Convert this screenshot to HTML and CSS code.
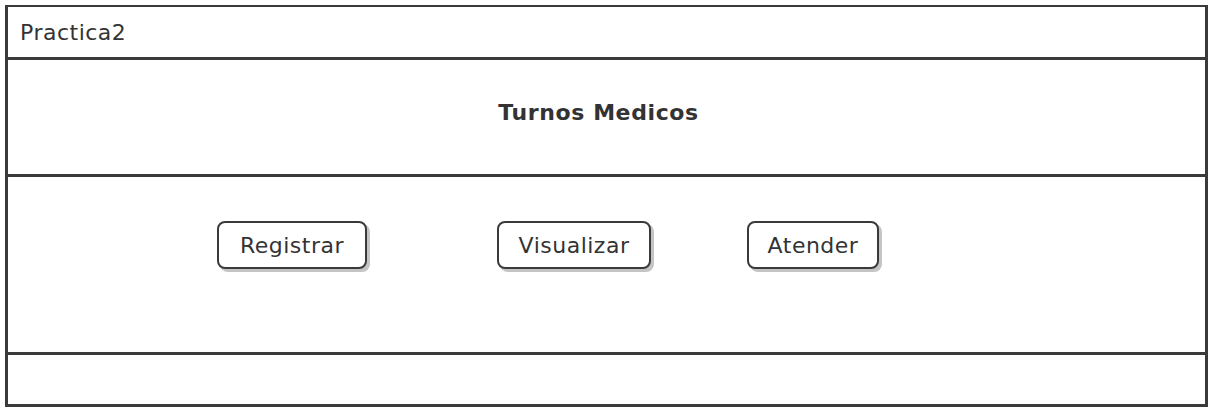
FILE: index.html
```html
<!DOCTYPE html>
<html lang="es">
<head>
  <meta charset="UTF-8" />
  <title>Practica2</title>
  <link rel="stylesheet" href="styles.css">
</head>
<body>
  <div class="frame">
    <div class="title-bar">Practica2</div>
    <div class="header">
      <h1>Turnos Medicos</h1>
    </div>
    <div class="actions">
      <button class="btn btn-registrar">Registrar</button>
      <button class="btn btn-visualizar">Visualizar</button>
      <button class="btn btn-atender">Atender</button>
    </div>
    <div class="footer"></div>
  </div>
</body>
</html>
```

FILE: styles.css
```css
:root {
  --ink: #333333;
  --line: #3a3a3a;
  --font: 'DejaVu Sans', 'Noto Sans', sans-serif;
}

body {
  margin: 0;
  padding: 5px 0 0 5px;
  background: #ffffff;
  font-family: var(--font);
  color: var(--ink);
}

.frame {
  width: 1197px;
  height: 397px;
  border: 3px solid var(--line);
  border-top-width: 2px;
  display: flex;
  flex-direction: column;
}

.title-bar {
  height: 50px;
  border-bottom: 3px solid var(--line);
  padding-left: 12px;
  display: flex;
  align-items: center;
  font-size: 22px;
  letter-spacing: 0.5px;
}

.header {
  height: 114px;
  border-bottom: 3px solid var(--line);
  display: flex;
  align-items: center;
  justify-content: center;
  padding-right: 16px;
}

.header h1 {
  margin: 0 0 10px 0;
  font-size: 22px;
  font-weight: 700;
  letter-spacing: 0.6px;
}

.actions {
  height: 178px;
  border-bottom: 3px solid var(--line);
  display: flex;
  align-items: flex-start;
  padding-top: 44px;
  padding-left: 209px;
  box-sizing: border-box;
}

.btn {
  font-family: var(--font);
  font-size: 22px;
  letter-spacing: 0.5px;
  color: var(--ink);
  background: #ffffff;
  border: 2px solid var(--line);
  border-radius: 8px;
  height: 48px;
  padding: 0 6px;
  box-shadow: 3px 3px 0 #c4c4c4;
  cursor: pointer;
}

.btn-registrar {
  width: 150px;
}

.btn-visualizar {
  width: 154px;
  margin-left: 130px;
}

.btn-atender {
  width: 132px;
  margin-left: 96px;
}

.footer {
  flex: 1;
}
```
